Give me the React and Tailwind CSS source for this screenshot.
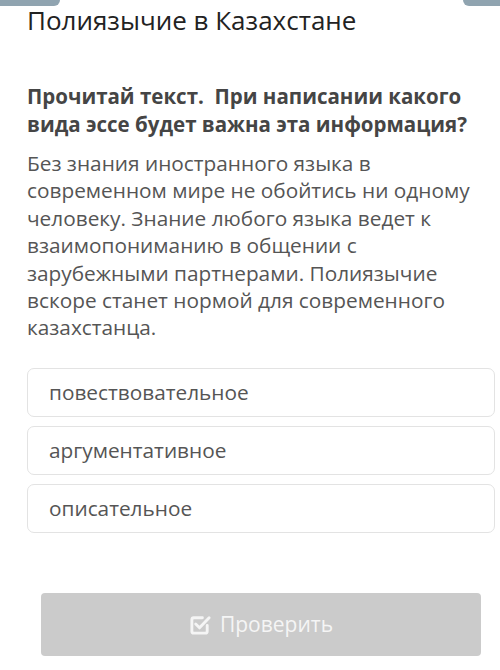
const OPTIONS = ['повествовательное', 'аргументативное', 'описательное']

function CheckIcon() {
  return (
    <svg className="w-[23px] h-[23px]" viewBox="0 0 24 24" fill="none" stroke="currentColor" strokeWidth={3} strokeLinecap="round" strokeLinejoin="round">
      <path d="M19 13v6a2 2 0 0 1-2 2H5a2 2 0 0 1-2-2V7a2 2 0 0 1 2-2h9" />
      <path d="M7 11.5l4 4L21 5" />
    </svg>
  )
}

export default function App() {
  return (
    <div className="relative w-[500px] h-[670px] bg-white overflow-hidden" style={{ fontFamily: '"Open Sans", "Noto Sans", sans-serif' }}>
      {/* top decorations */}
      <div className="absolute left-0 top-0 w-[60px] h-[6px] bg-[#90a4b0] rounded-br-[6px]" />
      <div className="absolute right-0 top-0 w-[37px] h-[6px] bg-[#90a4b0] rounded-bl-[6px]" />

      <div className="pl-[27px] pr-[5px] pt-[3px]">
        <h1 className="text-[26px] leading-[34px] text-[#222]">Полиязычие в Казахстане</h1>

        <p className="mt-[45px] w-[455px] text-[20.5px] leading-[28px] font-bold text-[#454545]">
          Прочитай текст.&nbsp; При написании какого вида эссе будет важна эта информация?
        </p>

        <p className="mt-[12px] w-[452px] text-[20.8px] leading-[27.4px] text-[#555]">
          Без знания иностранного языка в современном мире не обойтись ни одному человеку. Знание любого языка ведет к взаимопониманию в общении с зарубежными партнерами. Полиязычие вскоре станет нормой для современного казахстанца.
        </p>

        <div className="mt-[26px] flex flex-col gap-[9px]">
          {OPTIONS.map((o) => (
            <div key={o} className="h-[49px] flex items-center px-[21px] border border-[#e3e3e3] rounded-[7px] text-[20.8px] text-[#555]">
              {o}
            </div>
          ))}
        </div>
      </div>

      <div className="px-[41px] mt-[60px] pr-[19px]">
        <button className="w-[440px] h-[63px] bg-[#cbcbcb] rounded-[4px] flex items-center justify-center gap-[8px] text-[#f5f5f5] text-[21px]">
          <CheckIcon />
          Проверить
        </button>
      </div>
    </div>
  )
}
